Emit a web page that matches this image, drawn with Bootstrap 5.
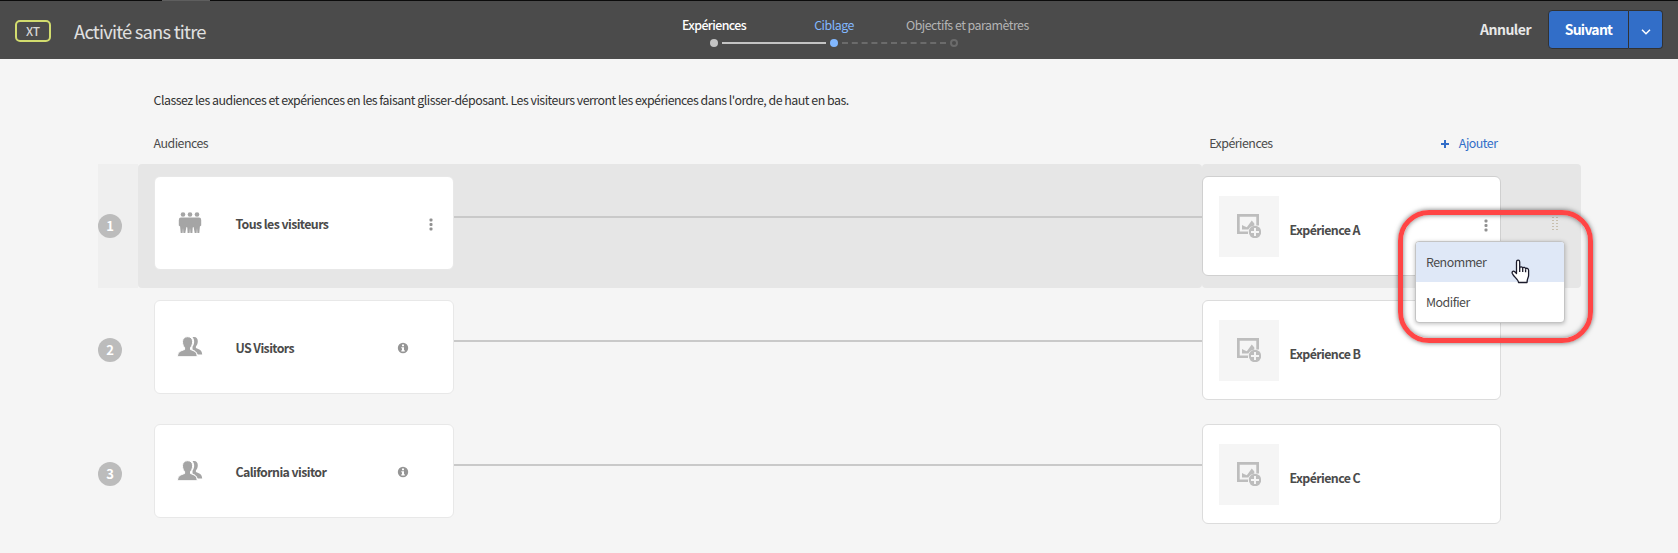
<!DOCTYPE html>
<html lang="fr">
<head>
<meta charset="utf-8">
<title>Activité sans titre</title>
<link rel="stylesheet" href="https://cdn.jsdelivr.net/npm/bootstrap@5.3.0/dist/css/bootstrap.min.css">
<style>
body{background:#f5f5f5;color:#323232;font:12.4px/18px "Noto Sans CJK JP","Noto Sans",sans-serif;letter-spacing:-.5px;height:553px;overflow:hidden}
svg{display:block}
button{letter-spacing:inherit}
.topbar{height:59px;background:#4b4b4b;border-top:1px solid #0b0b0b;position:relative}
.tab-edge{position:absolute;left:162px;top:-1px;width:48px;height:1px;background:#5e5e5e}
.kind{width:36px;height:22px;border:2px solid #d2dc6e;border-radius:5px;color:#d6d6d6;font-size:12px;line-height:17px;letter-spacing:-.2px;margin:1px 0 0 15px;font-weight:500}
.title-text{font-size:18.4px;line-height:28px;color:#e0e0e0;margin:2px 0 0 23px;letter-spacing:-.8px}
.steps{position:absolute;left:654px;top:15px}
.step-names{width:360px}
.step-name{width:120px;flex:none;white-space:nowrap;color:#b4b4b4}
.step-name.done{color:#fff;font-weight:500;letter-spacing:-.6px}
.step-name.active{color:#82b8ff}
.step-name.todo{padding-left:12px;width:auto}
.track{margin-top:5px}
.actions{padding-right:15px}
.cancel{font-weight:700;font-size:14px;color:#e8e8e8;margin:-2px 17px 0 0;letter-spacing:-.5px}
.btn-main,.btn-more{background:#326ec8;color:#fff;border:1px solid #323232;height:39px;padding:0;margin-top:-1px}
.btn-main{border-radius:4px 0 0 4px;font-weight:700;font-size:14px;letter-spacing:-.75px;width:81px;padding-bottom:2px}
.btn-more{border-left:0;border-radius:0 4px 4px 0;width:34px}
.board{margin-left:98px;width:1483px}
.intro{padding:32px 0 0 55.5px}
.heads{padding:25px 83.5px 0 55.5px;height:55px;color:#4b4b4b}
.add-link{color:#326ec8;gap:10px}
.exp-head{margin-left:1001px}
.lane-row{height:124px}
.num{width:40px;padding-top:50px}
.num span{display:block;width:24px;height:24px;border-radius:50%;background:#bcbcbc;color:#fff;font-weight:700;font-size:13px;letter-spacing:0;text-align:center;line-height:24px}
.aud{width:1064px;padding:12px 0 0 16px;border-radius:4px}
.exp{width:379px;padding-top:12px;border-radius:4px;position:relative}
.current .num{background:#efefef}
.current .aud,.current .exp{background:#e6e6e6}
.tile{background:#fff;border:1px solid #e8e8e8;border-radius:6px;flex:none}
.aud .tile{width:300px;height:94px;padding:0 20px 0 22px}
.exp .tile{width:299px;height:100px;padding:0 12px 0 16px;border-color:#dcdcdc}
.current .exp .tile{border-color:#d0d0d0}
.who{width:26px;margin-right:32.5px}
.wire{height:2px;background:#c9c9c9;margin-top:40px}
.label-b{font-weight:700;color:#4b4b4b;letter-spacing:-.6px;padding-top:1px}
.info{margin-right:24.5px;margin-top:2px}
.kebab{margin-top:2px}
.exp .kebab{margin-top:0;margin-bottom:1px}
.thumb{width:60px;height:61px;background:#f5f5f5;margin-right:10.5px}
.exp .label-b{margin-top:6px}
.grip{position:absolute;left:350px;top:53px}
.menu-box{position:absolute;left:213px;top:77px;width:150px;height:82px;background:#fff;border:1px solid #c4c4c4;border-radius:4px;box-shadow:0 1px 4px rgba(0,0,0,.25);z-index:3;overflow:hidden;color:#4b4b4b}
.menu-box div{height:40px;padding:11px 10px}
.menu-box .hot{background:#dfe8f7}
.ring{position:absolute;left:196px;top:46px;width:195px;height:133px;border:5px solid #ff4545;border-radius:31px;z-index:4;box-shadow:0 0 5px rgba(0,0,0,.55),inset 0 0 5px rgba(0,0,0,.5)}
.pointer{position:absolute;left:309px;top:95px;z-index:5}
</style>
</head>
<body>
<svg class="d-none">
<symbol id="pair" viewBox="0 0 26 22"><path d="M15.500 1.200c3.300-1 5.300.7 5.300 4 0 2.600-1 4.200-1.900 5.200v1.700c3.200 1.200 6.100 2.200 6.300 6.400h-4.500c-.8-2.600-3-4.300-5.200-5.100v-2.700c2-2.600 2.500-7 0-9.500z"/><path d="M10.700.7c3.200 0 4.900 2 4.900 5 0 2.900-1.100 4.700-2.100 5.900v2c3.500 1.100 6.700 2.300 6.700 7.100H.5c0-4.800 3.400-6 7.100-7.100v-2c-1.100-1.200-2.100-3-2.100-5.900 0-3 2-5 5.200-5z" stroke="#fff" stroke-width="1"/></symbol>
<symbol id="trio" viewBox="0 0 24 22"><circle cx="5" cy="2.500" r="2.300"/><circle cx="12" cy="2.500" r="2.300"/><circle cx="19" cy="2.500" r="2.300"/><path d="M3 5.600h18a2.300 2.300 0 0 1 2.200 2.300v5.600l-1.300.9-.6 6.600h-1.900l-.4-5-.4 5h-1.900l-1.100-6-.9.400-.3 5.600h-2l-.4-5-.4 5h-2l-.3-5.600-.9-.4-1.100 6H5.400l-.4-5-.4 5H2.700l-.6-6.600-1.300-.9V7.900A2.300 2.300 0 0 1 3 5.600z"/></symbol>
<symbol id="dots" viewBox="0 0 4 13"><rect x=".5" y=".5" width="3" height="3" rx="1"/><rect x=".5" y="5" width="3" height="3" rx="1"/><rect x=".5" y="9.500" width="3" height="3" rx="1"/></symbol>
<symbol id="note" viewBox="0 0 12 12"><circle cx="6" cy="6" r="5.200"/><path d="M5 2.500h2v1.700H5zM4.300 5.200H7v3h.8v1.200H4.300V8.200H5V6.300h-.7z" fill="#fff"/></symbol>
<symbol id="addpic" viewBox="0 0 24 24"><path d="M0 0h22v11.500h-2.700V2.700H2.700v14.800H11V20H0z"/><path d="M5 15.500v-4.500l2.500 1.200 2.300 1 5-6.700 2.500 3v2l-4 1.500-2 2.500z"/><circle cx="18" cy="18" r="6.200"/><path d="M17 14h2v3h3v2h-3v3h-2v-3h-3v-2h3z" fill="#f5f5f5"/></symbol>
</svg>

<header class="topbar d-flex align-items-center">
  <span class="tab-edge"></span>
  <div class="kind text-center">XT</div>
  <div class="title-text">Activité sans titre</div>
  <div class="steps">
    <div class="step-names d-flex">
      <div class="step-name done text-center">Expériences</div>
      <div class="step-name active text-center">Ciblage</div>
      <div class="step-name todo">Objectifs et paramètres</div>
    </div>
    <svg class="track" width="360" height="10">
      <circle cx="60" cy="4" r="4" fill="#c4c4c4"/><path d="M68 4h104" stroke="#c4c4c4" stroke-width="2"/>
      <circle cx="180" cy="4" r="4" fill="#82b8ff"/><path d="M188 4h104" stroke="#6b6b6b" stroke-width="2" stroke-dasharray="6 3.800"/>
      <circle cx="300" cy="4" r="3" fill="none" stroke="#6b6b6b" stroke-width="2"/>
    </svg>
  </div>
  <div class="actions d-flex align-items-center ms-auto">
    <span class="cancel">Annuler</span>
    <button class="btn-main">Suivant</button>
    <button class="btn-more d-flex align-items-center justify-content-center"><svg class="mt-1" width="10" height="6" fill="none" stroke="#fff" stroke-width="1.500"><path d="M1 .8l4 4 4-4"/></svg></button>
  </div>
</header>

<main class="board">
  <p class="intro mb-0">Classez les audiences et expériences en les faisant glisser-déposant. Les visiteurs verront les expériences dans l'ordre, de haut en bas.</p>
  <div class="heads d-flex">
    <span>Audiences</span>
    <span class="exp-head">Expériences</span>
    <span class="add-link d-flex ms-auto"><svg class="mt-1" width="8" height="12" stroke="#326ec8" stroke-width="2"><path d="M0 6h8M4 2v8"/></svg>Ajouter</span>
  </div>

  <section class="lane-row current d-flex">
    <div class="num"><span>1</span></div>
    <div class="aud d-flex">
      <div class="tile d-flex align-items-center"><svg class="who" height="22" fill="#a5a5a5"><use href="#trio" width="24" height="22" x="1"/></svg><span class="label-b">Tous les visiteurs</span><svg class="kebab ms-auto" width="4" height="13" fill="#919191"><use href="#dots"/></svg></div>
      <div class="wire flex-fill"></div>
    </div>
    <div class="exp">
      <div class="tile d-flex align-items-center">
        <div class="thumb d-flex align-items-center justify-content-center"><svg width="24" height="24" fill="#bdbdbd"><use href="#addpic"/></svg></div>
        <span class="label-b">Expérience A</span><svg class="kebab ms-auto" width="4" height="13" fill="#919191"><use href="#dots"/></svg>
      </div>
      <svg class="grip" width="6" height="14" stroke="#c8bfae" stroke-dasharray="1 2" stroke-width="2"><path d="M1 0v14M5 0v14"/></svg>
      <div class="menu-box"><div class="hot">Renommer</div><div>Modifier</div></div>
      <div class="ring"></div>
      <svg class="pointer" width="20" height="26" fill="#fff" stroke="#1b1b2b" stroke-width="1.300" stroke-linejoin="round"><path d="M5.500 14.500V3c0-2.400 3.200-2.400 3.200 0v6c.3-1.600 2.900-1.400 3 .4.500-1.500 2.800-1.200 2.900.6.600-1.300 3-.8 3 1.200v5c0 2.500-1.600 3.500-1.600 7.300H7.500c0-3-5-5.800-6.300-9.300-.5-1.800 1.400-2.600 2.600-1.400z"/><path d="M8.700 9v4M11.700 9.800V13M14.600 10.400V13.300" fill="none"/></svg>
    </div>
  </section>

  <section class="lane-row d-flex">
    <div class="num"><span>2</span></div>
    <div class="aud d-flex">
      <div class="tile d-flex align-items-center"><svg class="who" height="22" fill="#a5a5a5"><use href="#pair"/></svg><span class="label-b">US Visitors</span><svg class="info ms-auto" width="12" height="12" fill="#959595"><use href="#note"/></svg></div>
      <div class="wire flex-fill"></div>
    </div>
    <div class="exp">
      <div class="tile d-flex align-items-center">
        <div class="thumb d-flex align-items-center justify-content-center"><svg width="24" height="24" fill="#bdbdbd"><use href="#addpic"/></svg></div>
        <span class="label-b">Expérience B</span>
      </div>
    </div>
  </section>

  <section class="lane-row d-flex">
    <div class="num"><span>3</span></div>
    <div class="aud d-flex">
      <div class="tile d-flex align-items-center"><svg class="who" height="22" fill="#a5a5a5"><use href="#pair"/></svg><span class="label-b">California visitor</span><svg class="info ms-auto" width="12" height="12" fill="#959595"><use href="#note"/></svg></div>
      <div class="wire flex-fill"></div>
    </div>
    <div class="exp">
      <div class="tile d-flex align-items-center">
        <div class="thumb d-flex align-items-center justify-content-center"><svg width="24" height="24" fill="#bdbdbd"><use href="#addpic"/></svg></div>
        <span class="label-b">Expérience C</span>
      </div>
    </div>
  </section>
</main>
<script src="https://cdn.jsdelivr.net/npm/bootstrap@5.3.0/dist/js/bootstrap.bundle.min.js"></script>
</body>
</html>
